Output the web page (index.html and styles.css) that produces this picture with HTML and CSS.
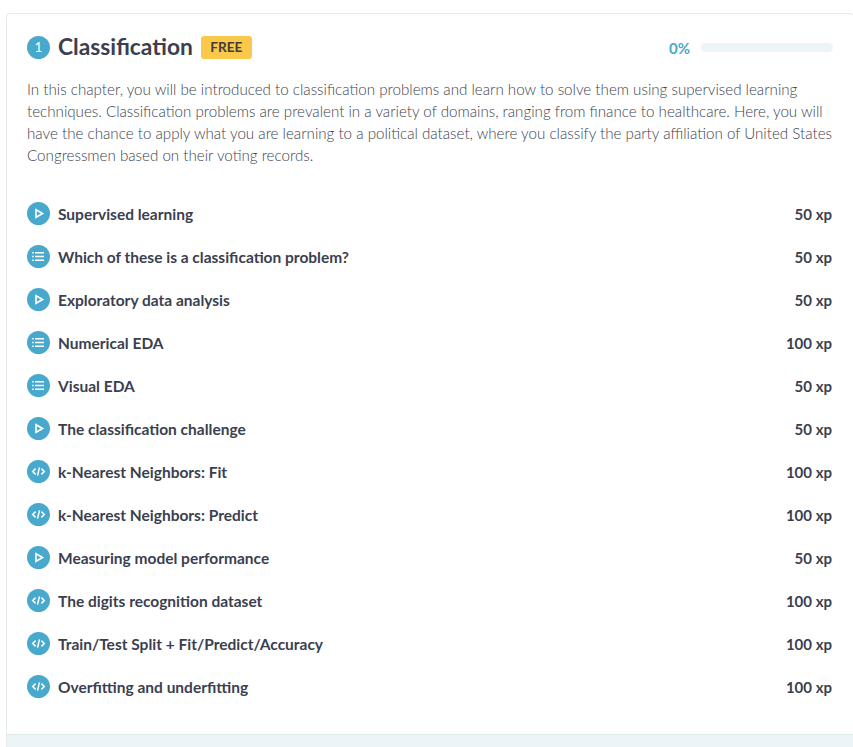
FILE: index.html
```html
<!DOCTYPE html>
<html lang="en">
<head>
<meta charset="utf-8">
<title>Classification</title>
<link rel="stylesheet" href="styles.css">
</head>
<body>
<svg class="defs" aria-hidden="true">
  <symbol id="video" viewBox="0 0 23 23"><path d="M9 7.7v7.6l6.6-3.8z" fill="none" stroke="#fff" stroke-width="1.6"/></symbol>
  <symbol id="list" viewBox="0 0 23 23"><path d="M5.2 7.7h1.6M8 7.7h9M5.2 11.5h1.6M8 11.5h9M5.2 15.3h1.6M8 15.3h9" fill="none" stroke="#fff" stroke-width="1.4"/></symbol>
  <symbol id="code" viewBox="0 0 23 23"><path d="M8.6 8.6L5.7 11.5l2.9 2.9M14.4 8.6l2.9 2.9-2.9 2.9M12.5 7.4l-2 8.2" fill="none" stroke="#fff" stroke-width="1.5"/></symbol>
</svg>
<main class="chapter">
  <header class="head">
    <span class="number">1</span>
    <h1 class="title">Classification</h1>
    <span class="badge">FREE</span>
    <span class="percent">0%</span>
    <span class="bar"></span>
  </header>
  <p class="description">In this chapter, you will be introduced to classification problems and learn how to solve them using supervised learning<br>techniques. Classification problems are prevalent in a variety of domains, ranging from finance to healthcare. Here, you will<br>have the chance to apply what you are learning to a political dataset, where you classify the party affiliation of United States<br>Congressmen based on their voting records.</p>
  <ul class="exercises">
    <li><svg class="icon"><use href="#video"/></svg><span class="name">Supervised learning</span><span class="xp">50 xp</span></li>
    <li><svg class="icon"><use href="#list"/></svg><span class="name">Which of these is a classification problem?</span><span class="xp">50 xp</span></li>
    <li><svg class="icon"><use href="#video"/></svg><span class="name">Exploratory data analysis</span><span class="xp">50 xp</span></li>
    <li><svg class="icon"><use href="#list"/></svg><span class="name">Numerical EDA</span><span class="xp">100 xp</span></li>
    <li><svg class="icon"><use href="#list"/></svg><span class="name">Visual EDA</span><span class="xp">50 xp</span></li>
    <li><svg class="icon"><use href="#video"/></svg><span class="name">The classification challenge</span><span class="xp">50 xp</span></li>
    <li><svg class="icon"><use href="#code"/></svg><span class="name">k-Nearest Neighbors: Fit</span><span class="xp">100 xp</span></li>
    <li><svg class="icon"><use href="#code"/></svg><span class="name">k-Nearest Neighbors: Predict</span><span class="xp">100 xp</span></li>
    <li><svg class="icon"><use href="#video"/></svg><span class="name">Measuring model performance</span><span class="xp">50 xp</span></li>
    <li><svg class="icon"><use href="#code"/></svg><span class="name">The digits recognition dataset</span><span class="xp">100 xp</span></li>
    <li><svg class="icon"><use href="#code"/></svg><span class="name">Train/Test Split + Fit/Predict/Accuracy</span><span class="xp">100 xp</span></li>
    <li><svg class="icon"><use href="#code"/></svg><span class="name">Overfitting and underfitting</span><span class="xp">100 xp</span></li>
  </ul>
  <footer class="foot"></footer>
</main>
</body>
</html>
```
FILE: styles.css
```css
* { box-sizing: border-box; }
body { margin: 0; height: 747px; overflow: hidden; background: #fff; color: #3b3f4f; font-family: Lato, sans-serif; }
.defs { display: none; }
.chapter { margin: 13px -1px 0 6px; height: 740px; border: 1px solid #e6eaeb; border-radius: 4px 4px 0 0; }
.head { display: flex; align-items: center; height: 24px; margin: 21px 20px 0; }
.number { width: 23px; height: 23px; border-radius: 50%; background: #48a9cc; color: #fff; font-size: 13.5px; font-weight: 400; line-height: 23px; text-align: center; }
.title { margin: 0 0 0 8px; padding-bottom: 2px; font-size: 22.8px; line-height: 24px; font-weight: 700; }
.badge { margin-left: 8px; width: 51px; height: 23px; border-radius: 3px; background: #fac84b; color: #3f3c39; font-size: 13.6px; line-height: 22px; font-weight: 700; text-align: center; }
.percent { margin-left: auto; padding-top: 1px; color: #48a9cc; font-size: 15px; font-weight: 700; }
.bar { width: 132px; height: 9px; margin-left: 11px; margin-top: 1px; border-radius: 5px; background: #ebf4f7; }
.description { margin: 19px 0 0 20px; font-size: 15.16px; line-height: 22px; font-weight: 300; white-space: nowrap; }
.exercises { list-style: none; margin: 26px 21px 0 20px; padding: 0; }
.exercises li { display: flex; align-items: center; height: 43px; font-size: 15px; font-weight: 700; }
.icon { width: 23px; height: 23px; border-radius: 50%; background: #48a9cc; }
.name { margin-left: 8px; font-size: 15.5px; }
.xp { margin-left: auto; }
.foot { height: 20px; margin-top: 26px; border-top: 1px solid #dfe8eb; background: #ebf4f7; }
```
